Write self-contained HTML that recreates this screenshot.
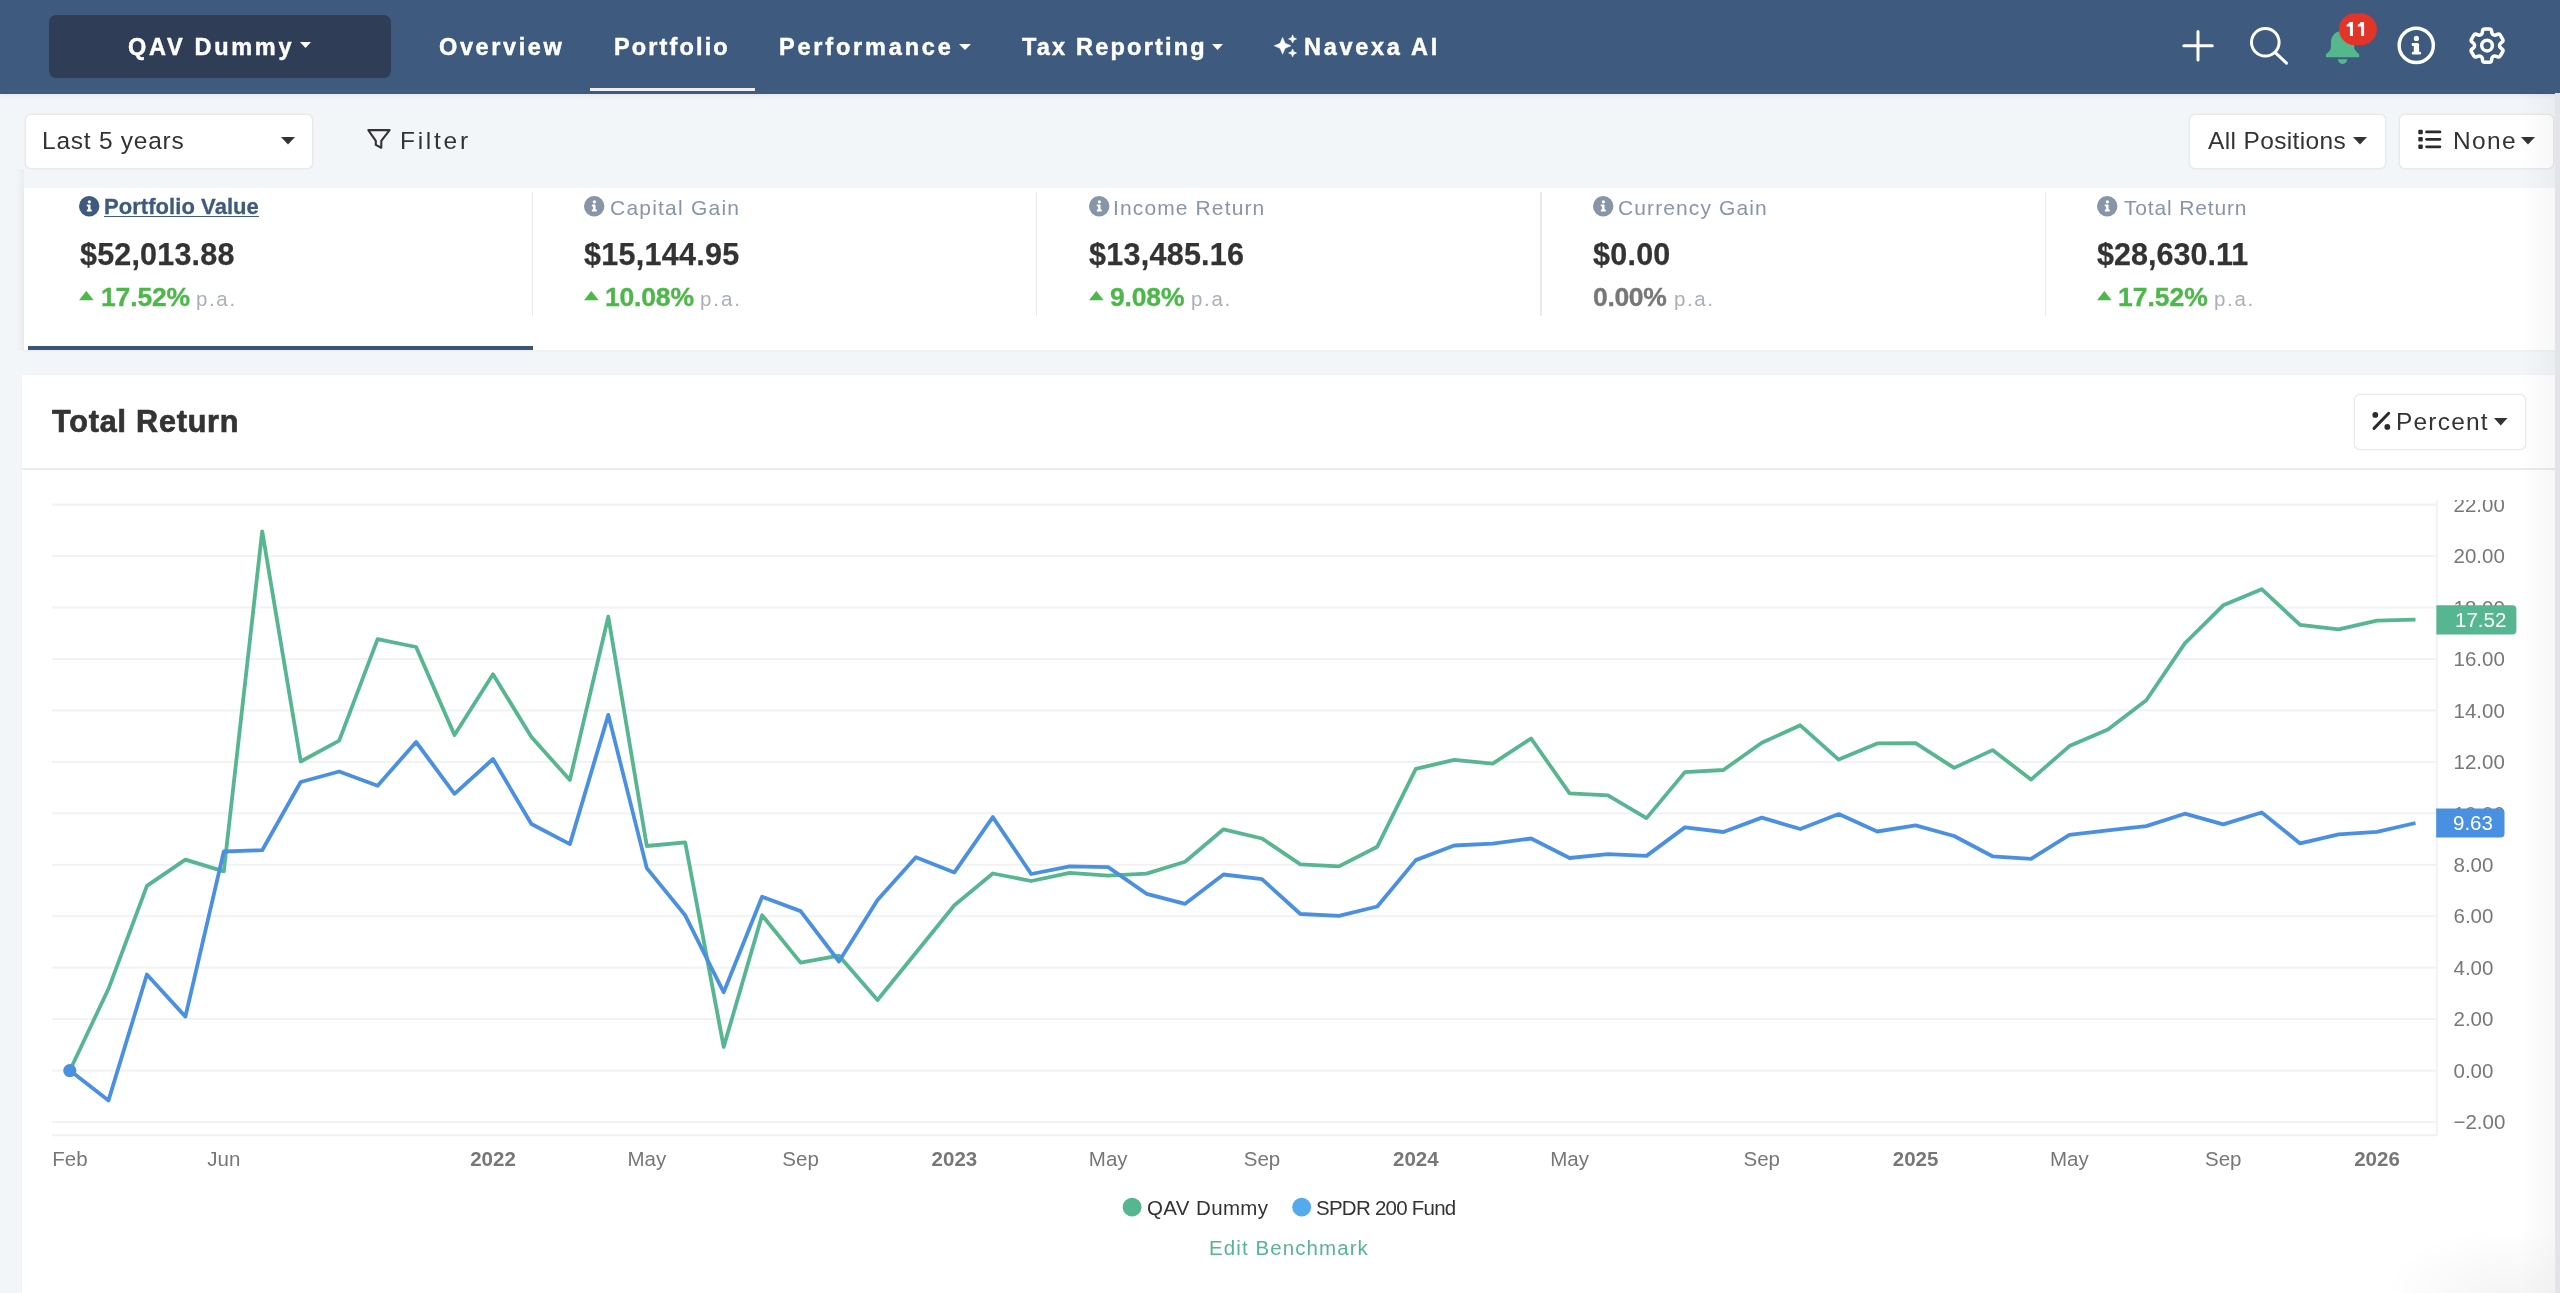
<!DOCTYPE html>
<html><head><meta charset="utf-8"><title>Navexa Portfolio</title>
<style>
html,body{margin:0;padding:0;}
body{width:2560px;height:1293px;overflow:hidden;position:relative;background:#f3f6f9;font-family:"Liberation Sans", sans-serif;}
.a{position:absolute;}
.t{position:absolute;white-space:nowrap;line-height:1;will-change:transform;}
svg.a{overflow:visible;will-change:transform;}
</style></head><body>
<div class="a" style="left:0px;top:0px;width:2560.00px;height:94.00px;background:#3e5a7e;box-shadow:0 1px 6px rgba(40,50,70,0.10)"></div>
<div class="a" style="left:49px;top:15px;width:342.00px;height:63.00px;background:#2f3d57;border-radius:7px"></div>
<div class="t" style="left:128.00px;top:36.20px;font-size:23.5px;font-weight:700;color:#ffffff;letter-spacing:2.700px;-webkit-text-stroke:0.45px #fff">QAV Dummy</div>
<svg class="a" style="left:300px;top:42px" width="11.00" height="6.00" viewBox="0 0 11.00 6.00"><path d="M0 0H11.00L5.50 6.00Z" fill="#ffffff"/></svg>
<div class="t" style="left:439.40px;top:35.80px;font-size:23.5px;font-weight:700;color:#ffffff;letter-spacing:2.614px;-webkit-text-stroke:0.45px #fff">Overview</div>
<div class="t" style="left:614.20px;top:35.80px;font-size:23.5px;font-weight:700;color:#ffffff;letter-spacing:2.137px;-webkit-text-stroke:0.45px #fff">Portfolio</div>
<div class="a" style="left:590px;top:88px;width:165.00px;height:3.00px;background:#f1eded"></div>
<div class="t" style="left:779.20px;top:35.80px;font-size:23.5px;font-weight:700;color:#ffffff;letter-spacing:2.810px;-webkit-text-stroke:0.45px #fff">Performance</div>
<svg class="a" style="left:959px;top:44px" width="12.00" height="6.00" viewBox="0 0 12.00 6.00"><path d="M0 0H12.00L6.00 6.00Z" fill="#ffffff"/></svg>
<div class="t" style="left:1022.00px;top:35.80px;font-size:23.5px;font-weight:700;color:#ffffff;letter-spacing:2.200px;-webkit-text-stroke:0.45px #fff">Tax Reporting</div>
<svg class="a" style="left:1212px;top:44px" width="11.00" height="6.00" viewBox="0 0 11.00 6.00"><path d="M0 0H11.00L5.50 6.00Z" fill="#ffffff"/></svg>
<svg class="a" style="left:0;top:0" width="2560" height="93" viewBox="0 0 2560 93"><path d="M1282.60 37.40L1285.12 43.28L1291.00 45.80L1285.12 48.32L1282.60 54.20L1280.08 48.32L1274.20 45.80L1280.08 43.28ZM1292.60 34.80L1293.83 37.67L1296.70 38.90L1293.83 40.13L1292.60 43.00L1291.37 40.13L1288.50 38.90L1291.37 37.67ZM1292.60 48.90L1293.83 51.77L1296.70 53.00L1293.83 54.23L1292.60 57.10L1291.37 54.23L1288.50 53.00L1291.37 51.77Z" fill="#fff" stroke="#fff" stroke-width="0.5" stroke-linejoin="round"/></svg>
<div class="t" style="left:1303.60px;top:35.80px;font-size:23.5px;font-weight:700;color:#ffffff;letter-spacing:2.725px;-webkit-text-stroke:0.45px #fff">Navexa AI</div>
<svg class="a" style="left:0;top:0" width="2560" height="93" viewBox="0 0 2560 93">
<g stroke="#fff" stroke-width="3" stroke-linecap="round" fill="none">
<path d="M2198 31.5V60M2183.8 45.8H2212.3"/>
<circle cx="2265.3" cy="42.3" r="13.8"/>
<path d="M2275.6 52.8L2286.5 63.2"/>
<circle cx="2416.25" cy="45.4" r="17.1" stroke-width="3.4"/>
</g>
<g fill="#fff">
<circle cx="2416.4" cy="38.4" r="2.6"/>
<path d="M2412.4 43.1H2417.6Q2419.1 43.1 2419.1 44.6V51.8H2419.8Q2421.2 51.8 2421.2 53.2Q2421.2 54.6 2419.8 54.6H2413.1Q2411.7 54.6 2411.7 53.2Q2411.7 51.8 2413.1 51.8H2413.8V46H2412.4Q2411.7 46 2411.7 44.55Q2411.7 43.1 2412.4 43.1Z"/>
</g>
<g transform="translate(2464.850,23.370) scale(1.85)" stroke="#fff" stroke-width="1.892" fill="none" stroke-linecap="round" stroke-linejoin="round">
<path d="M9.594 3.94c.09-.542.56-.94 1.11-.94h2.593c.55 0 1.02.398 1.11.94l.213 1.281c.063.374.313.686.645.87.074.04.147.083.22.127.325.196.72.257 1.075.124l1.217-.456a1.125 1.125 0 0 1 1.37.49l1.296 2.247a1.125 1.125 0 0 1-.26 1.431l-1.003.827c-.293.241-.438.613-.43.992a7.723 7.723 0 0 1 0 .255c-.008.378.137.75.43.991l1.004.827c.424.35.534.955.26 1.43l-1.298 2.247a1.125 1.125 0 0 1-1.369.491l-1.217-.456c-.355-.133-.75-.072-1.076.124a6.470 6.470 0 0 1-.22.128c-.331.183-.581.495-.644.869l-.213 1.281c-.09.543-.56.94-1.110.94h-2.594c-.55 0-1.019-.398-1.11-.94l-.213-1.281c-.062-.374-.312-.686-.644-.87a6.520 6.520 0 0 1-.22-.127c-.325-.196-.72-.257-1.076-.124l-1.217.456a1.125 1.125 0 0 1-1.369-.49l-1.297-2.247a1.125 1.125 0 0 1 .26-1.431l1.004-.827c.292-.24.437-.613.43-.991a6.932 6.932 0 0 1 0-.255c.007-.38-.138-.751-.43-.992l-1.004-.827a1.125 1.125 0 0 1-.26-1.43l1.297-2.247a1.125 1.125 0 0 1 1.37-.491l1.216.456c.356.133.751.072 1.076-.124.072-.044.146-.086.22-.128.332-.183.582-.495.644-.869l.214-1.28Z"/><circle cx="12" cy="12" r="2.9"/>
</g>
<path fill="#55b88d" d="M2342.6 30.8C2335.5 30.8 2330.9 36 2330.9 43V47.5C2330.9 49.5 2329.5 51.5 2326 54.2V57.2H2359.2V54.2C2355.7 51.5 2354.3 49.5 2354.3 47.5V43C2354.3 36 2349.7 30.8 2342.6 30.8Z"/>
<path fill="#55b88d" d="M2337.9 59.3H2347.3A4.7 4.7 0 0 1 2337.9 59.3Z"/>
<rect x="2338.9" y="13.2" width="38" height="32" rx="16" fill="#e3342a"/>
</svg>
<svg class="a" style="left:0;top:0" width="2560" height="93" viewBox="0 0 2560 93"><path fill="#fff" d="M2349.90 22.1H2352.90V36H2349.90V26.4L2346.60 26.5V24.7Q2348.70 24.3 2349.50 22.1ZM2361.10 22.1H2364.10V36H2361.10V26.4L2357.80 26.5V24.7Q2359.90 24.3 2360.70 22.1Z"/></svg>
<div class="a" style="left:25px;top:113.5px;width:287.50px;height:55.00px;background:#fff;border:1px solid #e9e9e9;border-radius:6px;box-sizing:border-box;box-shadow:0 0 1.5px rgba(0,0,0,0.10)"></div>
<div class="t" style="left:42.40px;top:128.75px;font-size:24.5px;font-weight:400;color:#333;letter-spacing:0.755px;">Last 5 years</div>
<svg class="a" style="left:280.5px;top:137px" width="14.00" height="7.50" viewBox="0 0 14.00 7.50"><path d="M0 0H14.00L7.00 7.50Z" fill="#333"/></svg>
<svg class="a" style="left:0;top:0" width="600" height="200" viewBox="0 0 600 200"><path d="M368.3 130.1H389.6L381.3 140.9V147.7L375.8 144.9V140.9Z" fill="none" stroke="#333" stroke-width="2.1" stroke-linejoin="round"/></svg>
<div class="t" style="left:399.60px;top:129.00px;font-size:24.5px;font-weight:400;color:#333;letter-spacing:2.720px;">Filter</div>
<div class="a" style="left:2189px;top:113.5px;width:196.50px;height:55.00px;background:#fff;border:1px solid #e9e9e9;border-radius:6px;box-sizing:border-box;box-shadow:0 0 1.5px rgba(0,0,0,0.10)"></div>
<div class="t" style="left:2208.20px;top:128.50px;font-size:24.5px;font-weight:400;color:#333;letter-spacing:0.358px;">All Positions</div>
<svg class="a" style="left:2352.5px;top:137px" width="14.00" height="7.50" viewBox="0 0 14.00 7.50"><path d="M0 0H14.00L7.00 7.50Z" fill="#333"/></svg>
<div class="a" style="left:2398.5px;top:113.5px;width:155.00px;height:55.00px;background:#fff;border:1px solid #e9e9e9;border-radius:6px;box-sizing:border-box;box-shadow:0 0 1.5px rgba(0,0,0,0.10)"></div>
<svg class="a" style="left:0;top:0" width="2560" height="200" viewBox="0 0 2560 200"><g fill="#2b2b2b">
<rect x="2418.3" y="129.7" width="4.5" height="4.5" rx="1"/><rect x="2418.3" y="137.1" width="4.5" height="4.5" rx="1"/><rect x="2418.3" y="144.6" width="4.5" height="4.5" rx="1"/>
<rect x="2425.2" y="130.5" width="16.1" height="2.8" rx="1.4"/><rect x="2425.2" y="137.9" width="16.1" height="2.8" rx="1.4"/><rect x="2425.2" y="145.4" width="16.1" height="2.8" rx="1.4"/>
</g></svg>
<div class="t" style="left:2452.60px;top:128.50px;font-size:24.5px;font-weight:400;color:#333;letter-spacing:1.367px;">None</div>
<svg class="a" style="left:2521.3px;top:137px" width="14.00" height="7.50" viewBox="0 0 14.00 7.50"><path d="M0 0H14.00L7.00 7.50Z" fill="#333"/></svg>
<div class="a" style="left:24px;top:187.5px;width:2531.00px;height:162.50px;background:#fff;box-shadow:0 1px 2px rgba(0,0,0,0.04)"></div>
<div class="a" style="left:16px;top:168.5px;width:8.00px;height:181.50px;background:linear-gradient(to right,rgba(0,0,0,0),rgba(0,0,0,0.035))"></div>
<div class="a" style="left:28px;top:346px;width:505.00px;height:4.00px;background:#395579"></div>
<svg class="a" style="left:79.3px;top:196.2px" width="20.4" height="20.4" viewBox="0 0 20 20"><circle cx="10" cy="10" r="10" fill="#3e5a7e"/><circle cx="10.2" cy="5.7" r="1.6" fill="#fff"/><path d="M7.9 8.4H10.6Q11.3 8.4 11.3 9.1V13.3H12Q12.6 13.3 12.6 14.2Q12.6 15.1 12 15.1H8.2Q7.6 15.1 7.6 14.2Q7.6 13.3 8.2 13.3H8.9V10.2H8.2Q7.6 10.2 7.6 9.3Q7.6 8.4 7.9 8.4Z" fill="#fff"/></svg>
<div class="t" style="left:103.50px;top:196.30px;font-size:22px;font-weight:700;color:#3e5a7e;letter-spacing:0.057px;text-decoration:underline;text-decoration-thickness:1.4px;text-underline-offset:1.6px;-webkit-text-stroke:0.3px #3e5a7e">Portfolio Value</div>
<div class="t" style="left:79.50px;top:238.70px;font-size:30.5px;font-weight:700;color:#333;letter-spacing:0.189px;-webkit-text-stroke:0.25px #333">$52,013.88</div>
<svg class="a" style="left:79.3px;top:291px" width="14.7" height="9.2" viewBox="0 0 14.7 9.2"><path d="M7.35 0.3Q7.35 0 7.6 0.3L14.7 9.2H0L7.1 0.3Z" fill="#4cb848"/></svg>
<div class="t" style="left:100.60px;top:283.50px;font-size:26.5px;font-weight:700;color:#4cb848;letter-spacing:-0.140px;-webkit-text-stroke:0.35px #4cb848">17.52%</div>
<div class="t" style="left:196.30px;top:288.50px;font-size:20.5px;font-weight:400;color:#a9b0b9;letter-spacing:1.633px;">p.a.</div>
<div class="a" style="left:531.5px;top:192px;width:1.50px;height:124.00px;background:#e8eaed"></div>
<svg class="a" style="left:583.9px;top:196.2px" width="20.4" height="20.4" viewBox="0 0 20 20"><circle cx="10" cy="10" r="10" fill="#8795a8"/><circle cx="10.2" cy="5.7" r="1.6" fill="#fff"/><path d="M7.9 8.4H10.6Q11.3 8.4 11.3 9.1V13.3H12Q12.6 13.3 12.6 14.2Q12.6 15.1 12 15.1H8.2Q7.6 15.1 7.6 14.2Q7.6 13.3 8.2 13.3H8.9V10.2H8.2Q7.6 10.2 7.6 9.3Q7.6 8.4 7.9 8.4Z" fill="#fff"/></svg>
<div class="t" style="left:609.60px;top:196.50px;font-size:21px;font-weight:400;color:#8795a8;letter-spacing:1.218px;">Capital Gain</div>
<div class="t" style="left:584.00px;top:238.70px;font-size:30.5px;font-weight:700;color:#333;letter-spacing:0.289px;-webkit-text-stroke:0.25px #333">$15,144.95</div>
<svg class="a" style="left:583.9px;top:291px" width="14.7" height="9.2" viewBox="0 0 14.7 9.2"><path d="M7.35 0.3Q7.35 0 7.6 0.3L14.7 9.2H0L7.1 0.3Z" fill="#4cb848"/></svg>
<div class="t" style="left:605.20px;top:283.50px;font-size:26.5px;font-weight:700;color:#4cb848;letter-spacing:-0.180px;-webkit-text-stroke:0.35px #4cb848">10.08%</div>
<div class="t" style="left:700.20px;top:288.50px;font-size:20.5px;font-weight:400;color:#a9b0b9;letter-spacing:1.933px;">p.a.</div>
<div class="a" style="left:1035.5px;top:192px;width:1.50px;height:124.00px;background:#e8eaed"></div>
<svg class="a" style="left:1088.6px;top:196.2px" width="20.4" height="20.4" viewBox="0 0 20 20"><circle cx="10" cy="10" r="10" fill="#8795a8"/><circle cx="10.2" cy="5.7" r="1.6" fill="#fff"/><path d="M7.9 8.4H10.6Q11.3 8.4 11.3 9.1V13.3H12Q12.6 13.3 12.6 14.2Q12.6 15.1 12 15.1H8.2Q7.6 15.1 7.6 14.2Q7.6 13.3 8.2 13.3H8.9V10.2H8.2Q7.6 10.2 7.6 9.3Q7.6 8.4 7.9 8.4Z" fill="#fff"/></svg>
<div class="t" style="left:1112.90px;top:196.50px;font-size:21px;font-weight:400;color:#8795a8;letter-spacing:1.125px;">Income Return</div>
<div class="t" style="left:1088.50px;top:238.70px;font-size:30.5px;font-weight:700;color:#333;letter-spacing:0.267px;-webkit-text-stroke:0.25px #333">$13,485.16</div>
<svg class="a" style="left:1088.6px;top:291px" width="14.7" height="9.2" viewBox="0 0 14.7 9.2"><path d="M7.35 0.3Q7.35 0 7.6 0.3L14.7 9.2H0L7.1 0.3Z" fill="#4cb848"/></svg>
<div class="t" style="left:1109.60px;top:283.50px;font-size:26.5px;font-weight:700;color:#4cb848;letter-spacing:-0.175px;-webkit-text-stroke:0.35px #4cb848">9.08%</div>
<div class="t" style="left:1190.50px;top:288.50px;font-size:20.5px;font-weight:400;color:#a9b0b9;letter-spacing:1.700px;">p.a.</div>
<div class="a" style="left:1540.2px;top:192px;width:1.50px;height:124.00px;background:#e8eaed"></div>
<svg class="a" style="left:1592.8px;top:196.2px" width="20.4" height="20.4" viewBox="0 0 20 20"><circle cx="10" cy="10" r="10" fill="#8795a8"/><circle cx="10.2" cy="5.7" r="1.6" fill="#fff"/><path d="M7.9 8.4H10.6Q11.3 8.4 11.3 9.1V13.3H12Q12.6 13.3 12.6 14.2Q12.6 15.1 12 15.1H8.2Q7.6 15.1 7.6 14.2Q7.6 13.3 8.2 13.3H8.9V10.2H8.2Q7.6 10.2 7.6 9.3Q7.6 8.4 7.9 8.4Z" fill="#fff"/></svg>
<div class="t" style="left:1618.20px;top:196.50px;font-size:21px;font-weight:400;color:#8795a8;letter-spacing:1.108px;">Currency Gain</div>
<div class="t" style="left:1593.00px;top:238.70px;font-size:30.5px;font-weight:700;color:#333;letter-spacing:0.250px;-webkit-text-stroke:0.25px #333">$0.00</div>
<div class="t" style="left:1593.00px;top:283.50px;font-size:26.5px;font-weight:700;color:#777;letter-spacing:-0.325px;-webkit-text-stroke:0.35px #777">0.00%</div>
<div class="t" style="left:1673.50px;top:288.50px;font-size:20.5px;font-weight:400;color:#a9b0b9;letter-spacing:1.600px;">p.a.</div>
<div class="a" style="left:2044.5px;top:192px;width:1.50px;height:124.00px;background:#e8eaed"></div>
<svg class="a" style="left:2097.3px;top:196.2px" width="20.4" height="20.4" viewBox="0 0 20 20"><circle cx="10" cy="10" r="10" fill="#8795a8"/><circle cx="10.2" cy="5.7" r="1.6" fill="#fff"/><path d="M7.9 8.4H10.6Q11.3 8.4 11.3 9.1V13.3H12Q12.6 13.3 12.6 14.2Q12.6 15.1 12 15.1H8.2Q7.6 15.1 7.6 14.2Q7.6 13.3 8.2 13.3H8.9V10.2H8.2Q7.6 10.2 7.6 9.3Q7.6 8.4 7.9 8.4Z" fill="#fff"/></svg>
<div class="t" style="left:2123.70px;top:196.50px;font-size:21px;font-weight:400;color:#8795a8;letter-spacing:0.836px;">Total Return</div>
<div class="t" style="left:2097.30px;top:238.70px;font-size:30.5px;font-weight:700;color:#333;letter-spacing:0.033px;-webkit-text-stroke:0.25px #333">$28,630.11</div>
<svg class="a" style="left:2097.3px;top:291px" width="14.7" height="9.2" viewBox="0 0 14.7 9.2"><path d="M7.35 0.3Q7.35 0 7.6 0.3L14.7 9.2H0L7.1 0.3Z" fill="#4cb848"/></svg>
<div class="t" style="left:2117.60px;top:283.50px;font-size:26.5px;font-weight:700;color:#4cb848;letter-spacing:0.000px;-webkit-text-stroke:0.35px #4cb848">17.52%</div>
<div class="t" style="left:2214.30px;top:288.50px;font-size:20.5px;font-weight:400;color:#a9b0b9;letter-spacing:1.700px;">p.a.</div>
<div class="a" style="left:22px;top:375px;width:2535.00px;height:918.00px;background:#fff;box-shadow:0 0 2px rgba(0,0,0,0.05)"></div>
<div class="t" style="left:52.30px;top:406.40px;font-size:30.5px;font-weight:700;color:#333;letter-spacing:0.827px;-webkit-text-stroke:0.7px #333">Total Return</div>
<div class="a" style="left:22px;top:468px;width:2535.00px;height:2.00px;background:#e9ebee"></div>
<div class="a" style="left:2353.5px;top:393.5px;width:172.50px;height:56.00px;background:#fff;border:1px solid #e9e9e9;border-radius:6px;box-sizing:border-box;box-shadow:0 0 1.5px rgba(0,0,0,0.10)"></div>
<svg class="a" style="left:0;top:380px" width="2560" height="80" viewBox="0 380 2560 80"><g fill="#2b2b2b"><circle cx="2375.3" cy="414.9" r="2.9"/><circle cx="2387.3" cy="426.9" r="2.9"/></g><path d="M2374 428.4L2388.7 413.3" stroke="#2b2b2b" stroke-width="3" stroke-linecap="round"/></svg>
<div class="t" style="left:2395.80px;top:410.00px;font-size:24.5px;font-weight:400;color:#333;letter-spacing:1.200px;">Percent</div>
<svg class="a" style="left:2494px;top:418px" width="13.50" height="7.50" viewBox="0 0 13.50 7.50"><path d="M0 0H13.50L6.75 7.50Z" fill="#333"/></svg>
<svg class="a" style="left:0;top:0" width="2560" height="1293" viewBox="0 0 2560 1293">
<g fill="#f2f2f2">
<rect x="52" y="1121.1" width="2384" height="2"/>
<rect x="52" y="1069.6" width="2384" height="2"/>
<rect x="52" y="1018.1" width="2384" height="2"/>
<rect x="52" y="966.7" width="2384" height="2"/>
<rect x="52" y="915.2" width="2384" height="2"/>
<rect x="52" y="863.8" width="2384" height="2"/>
<rect x="52" y="812.3" width="2384" height="2"/>
<rect x="52" y="760.9" width="2384" height="2"/>
<rect x="52" y="709.4" width="2384" height="2"/>
<rect x="52" y="658.0" width="2384" height="2"/>
<rect x="52" y="606.5" width="2384" height="2"/>
<rect x="52" y="555.1" width="2384" height="2"/>
<rect x="52" y="503.6" width="2384" height="2"/>
<rect x="52" y="1134.3" width="2384" height="2"/>
<rect x="2435.8" y="500" width="2" height="636"/>
</g>
<svg x="2438" y="500" width="120" height="700" overflow="hidden">
<g font-family='"Liberation Sans", sans-serif' font-size="20.5" fill="#777">
<text x="15.5" y="629.3">−2.00</text>
<text x="15.5" y="577.8">0.00</text>
<text x="15.5" y="526.3">2.00</text>
<text x="15.5" y="474.9">4.00</text>
<text x="15.5" y="423.4">6.00</text>
<text x="15.5" y="372.0">8.00</text>
<text x="15.5" y="320.5">10.00</text>
<text x="15.5" y="269.1">12.00</text>
<text x="15.5" y="217.6">14.00</text>
<text x="15.5" y="166.2">16.00</text>
<text x="15.5" y="114.7">18.00</text>
<text x="15.5" y="63.3">20.00</text>
<text x="15.5" y="11.8">22.00</text>
</g></svg>
<polyline points="70.0,1070.2 108.5,988.8 146.9,885.9 185.4,859.6 223.8,871.4 262.2,531.3 300.7,761.5 339.2,740.6 377.6,639.2 416.1,647.0 454.5,735.1 493.0,674.3 531.4,736.9 569.9,779.9 608.3,616.7 646.8,846.0 685.2,842.3 723.7,1046.9 762.1,915.3 800.6,962.6 839.0,955.7 877.5,1000.0 915.9,952.7 954.4,905.3 992.8,873.5 1031.2,881.0 1069.7,872.9 1108.2,875.7 1146.6,873.6 1185.1,861.8 1223.5,829.3 1262.0,838.5 1300.4,864.3 1338.9,866.4 1377.3,846.7 1415.8,768.9 1454.2,759.9 1492.7,763.6 1531.1,738.5 1569.6,793.3 1608.0,795.3 1646.5,818.1 1684.9,772.1 1723.4,770.0 1761.8,742.7 1800.3,725.3 1838.7,759.6 1877.2,743.4 1915.6,743.2 1954.1,767.9 1992.5,750.1 2031.0,779.6 2069.4,746.1 2107.9,729.6 2146.3,700.3 2184.8,643.4 2223.2,605.3 2261.7,589.2 2300.1,624.9 2338.6,629.3 2377.0,620.6 2415.5,619.6" fill="none" stroke="#55b68f" stroke-width="3.8" stroke-linejoin="round"/>
<polyline points="70.0,1070.4 108.5,1100.4 146.9,974.5 185.4,1016.6 223.8,851.5 262.2,850.2 300.7,782.0 339.2,771.5 377.6,785.8 416.1,742.0 454.5,793.8 493.0,759.0 531.4,824.0 569.9,844.1 608.3,714.9 646.8,868.1 685.2,915.3 723.7,992.3 762.1,896.7 800.6,911.1 839.0,961.5 877.5,900.0 915.9,857.3 954.4,872.4 992.8,817.1 1031.2,874.0 1069.7,866.4 1108.2,867.1 1146.6,893.8 1185.1,903.8 1223.5,874.5 1262.0,879.2 1300.4,914.0 1338.9,915.8 1377.3,906.5 1415.8,860.1 1454.2,845.5 1492.7,843.7 1531.1,838.5 1569.6,858.0 1608.0,854.1 1646.5,855.9 1684.9,827.4 1723.4,832.0 1761.8,817.6 1800.3,829.0 1838.7,814.1 1877.2,831.5 1915.6,825.3 1954.1,836.0 1992.5,856.3 2031.0,858.8 2069.4,834.8 2107.9,830.3 2146.3,826.1 2184.8,813.7 2223.2,824.4 2261.7,812.5 2300.1,843.4 2338.6,834.3 2377.0,831.8 2415.5,823.0" fill="none" stroke="#4a90e2" stroke-width="3.8" stroke-linejoin="round"/>
<circle cx="69.8" cy="1070.6" r="6.6" fill="#4a90e2"/>
<path d="M2436.4 605.3H2512.4A4 4 0 0 1 2516.4 609.3V630.5A4 4 0 0 1 2512.4 634.5H2436.4Z" fill="#55b68f"/>
<text x="2455" y="626.5" font-family='"Liberation Sans", sans-serif' font-size="20.5" fill="#fff">17.52</text>
<path d="M2436.2 808.6H2500.5A4 4 0 0 1 2504.5 812.6V833.6A4 4 0 0 1 2500.5 837.6H2436.2Z" fill="#4a90e2"/>
<text x="2453" y="829.7" font-family='"Liberation Sans", sans-serif' font-size="20.5" fill="#fff">9.63</text>
<g font-family='"Liberation Sans", sans-serif' font-size="20.5" fill="#777" text-anchor="middle">
<text x="70.0" y="1166.3">Feb</text>
<text x="223.8" y="1166.3">Jun</text>
<text x="493.0" y="1166.3" font-weight="700">2022</text>
<text x="646.8" y="1166.3">May</text>
<text x="800.6" y="1166.3">Sep</text>
<text x="954.4" y="1166.3" font-weight="700">2023</text>
<text x="1108.2" y="1166.3">May</text>
<text x="1262.0" y="1166.3">Sep</text>
<text x="1415.8" y="1166.3" font-weight="700">2024</text>
<text x="1569.6" y="1166.3">May</text>
<text x="1761.8" y="1166.3">Sep</text>
<text x="1915.6" y="1166.3" font-weight="700">2025</text>
<text x="2069.4" y="1166.3">May</text>
<text x="2223.2" y="1166.3">Sep</text>
<text x="2377.0" y="1166.3" font-weight="700">2026</text>
</g>
</svg>
<svg class="a" style="left:1120px;top:1195px" width="200" height="25"><circle cx="12.1" cy="12.2" r="9.4" fill="#55b68f"/><circle cx="181.7" cy="12.2" r="9.4" fill="#55aaee"/></svg>
<div class="t" style="left:1146.60px;top:1197.80px;font-size:20.5px;font-weight:400;color:#333;letter-spacing:0.375px;">QAV Dummy</div>
<div class="t" style="left:1316.10px;top:1197.80px;font-size:20.5px;font-weight:400;color:#333;letter-spacing:-0.750px;">SPDR 200 Fund</div>
<div class="t" style="left:1209.40px;top:1237.70px;font-size:20.5px;font-weight:400;color:#55b68f;letter-spacing:1.085px;">Edit Benchmark</div>
<div class="a" style="left:2520px;top:93px;width:35.00px;height:1200.00px;background:linear-gradient(to right,rgba(0,0,0,0),rgba(0,0,0,0.03))"></div>
<div class="a" style="left:2555px;top:93px;width:5.00px;height:1200.00px;background:#e2e4e7"></div>
<div class="a" style="left:2380px;top:1180px;width:175.00px;height:113.00px;background:radial-gradient(ellipse 120px 70px at 125px 118px,rgba(0,0,0,0.045),rgba(0,0,0,0))"></div>
</body></html>
